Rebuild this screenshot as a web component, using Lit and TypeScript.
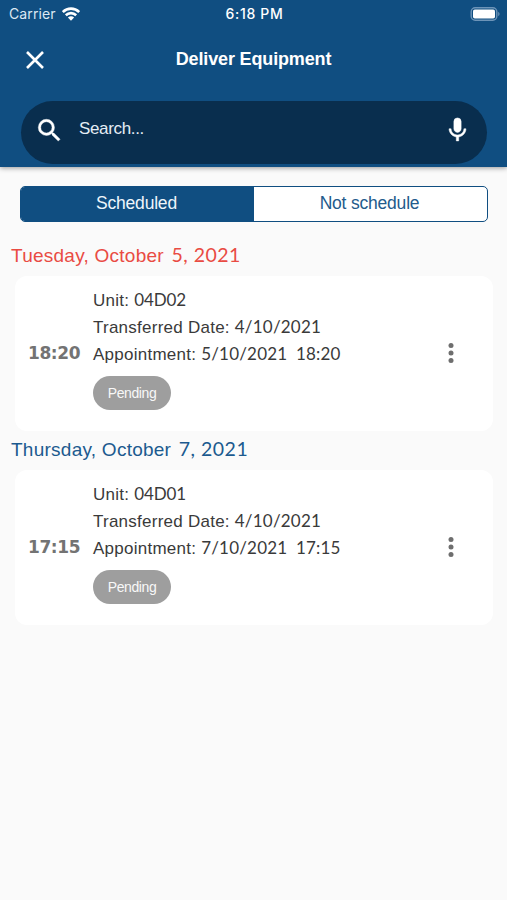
import { LitElement, html, css } from "lit";
import { customElement, property } from "lit/decorators.js";

interface Delivery {
  month: string;
  date: string;
  overdue: boolean;
  time: string;
  unit: string;
  transferred: string;
  appointment: string;
}

const deliveries: Delivery[] = [
  { month: "Tuesday, October", date: "5, 2021", overdue: true, time: "18:20", unit: "04D02", transferred: "4/10/2021", appointment: "5/10/2021 18:20" },
  { month: "Thursday, October", date: "7, 2021", overdue: false, time: "17:15", unit: "04D01", transferred: "4/10/2021", appointment: "7/10/2021 17:15" },
];

@customElement("status-bar")
export class StatusBar extends LitElement {
  static styles = css`
    :host { display: grid; grid-template-columns: 1fr auto 1fr; align-items: center; height: 27px; padding: 0 7px 0 9px; color: #fff; font: 14px/27px Inter, sans-serif; }
    .carrier { display: flex; align-items: center; gap: 6px; color: #dce8f3; letter-spacing: 0.1px; }
    .clock { font-weight: 500; font-size: 14px; letter-spacing: 0.7px; }
    .battery { justify-self: end; }
    svg { display: block; }
  `;
  render() {
    return html`
      <div class="carrier"><span>Carrier</span>
        <svg width="18" height="14" viewBox="0 0 18 14" fill="none" stroke="#fff" stroke-width="2.6">
          <path d="M.8 5C5.4.5 12.6.5 17.2 5"/><path d="M3.8 8.3c3-2.9 7.4-2.9 10.4 0"/>
          <path d="M9 13.7 5.9 10.5c1.7-1.6 4.5-1.6 6.2 0Z" fill="#fff" stroke="none"/>
        </svg>
      </div>
      <div class="clock">6:18 PM</div>
      <svg class="battery" width="30" height="14" viewBox="0 0 30 14">
        <rect x="1.2" y=".7" width="25.6" height="12.6" rx="4" fill="#104e81" stroke="#6d94b8" stroke-width="1.4"/>
        <rect x="3" y="2.5" width="22" height="9" rx="1.8" fill="#fff"/>
        <path d="M28.3 4.8c1.6.7 1.6 3.7 0 4.4Z" fill="#7c9fc0"/>
      </svg>`;
  }
}

@customElement("delivery-card")
export class DeliveryCard extends LitElement {
  @property({ attribute: false }) item!: Delivery;
  static styles = css`
    :host { display: flex; align-items: center; box-sizing: border-box; height: 155px; margin: 0 14px 0 15px; padding: 0 31px 2px 13px; border-radius: 12px; background: #fff; }
    .time { width: 65px; color: #737373; font: bold 17px/24px "DejaVu Sans", sans-serif; letter-spacing: -0.4px; }
    .info { flex: 1; padding-bottom: 8px; color: #3a3a3a; font-size: 17px; line-height: 27px; letter-spacing: 0.25px; }
    .row { height: 27px; }
    .value { font-family: Lato, sans-serif; line-height: 1; letter-spacing: -0.1px; }
    .date { letter-spacing: 0.2px; word-spacing: 4px; }
    .status { display: block; width: 78px; height: 34px; margin-top: 8px; border-radius: 17px; background: #9e9e9e; color: #f8f8f8; font-size: 14px; line-height: 34px; letter-spacing: -0.4px; text-align: center; }
    svg { display: block; }
  `;
  render() {
    const d = this.item;
    return html`
      <div class="time">${d.time}</div>
      <div class="info">
        <div class="row">Unit: <span class="value">${d.unit}</span></div>
        <div class="row">Transferred Date: <span class="value date">${d.transferred}</span></div>
        <div class="row">Appointment: <span class="value date">${d.appointment}</span></div>
        <span class="status">Pending</span>
      </div>
      <svg width="22" height="22" viewBox="0 0 22 22" fill="#6e6e6e">
        <circle cx="11" cy="3.6" r="2.5"/><circle cx="11" cy="11" r="2.5"/><circle cx="11" cy="18.4" r="2.5"/>
      </svg>`;
  }
}

@customElement("app-root")
export class AppRoot extends LitElement {
  static styles = css`
    :host { display: block; height: 900px; overflow: hidden; background: #fafafa; font-family: "Liberation Sans", Arial, sans-serif; }
    header { height: 167px; background: #104e81; box-shadow: 0 1px 5px rgba(0, 0, 0, 0.4); color: #fff; }
    .bar { display: grid; grid-template-columns: 70px 1fr 70px; align-items: center; height: 65px; }
    .close { margin-left: 26px; }
    h1 { margin: 0; padding-bottom: 2px; font-size: 18px; line-height: 24px; letter-spacing: -0.15px; text-align: center; }
    .search { display: flex; align-items: center; box-sizing: border-box; height: 63px; margin: 9px 20px 0 21px; padding: 0 18px 5px 16px; border-radius: 32px; background: #092e4e; }
    .query { flex: 1; margin-left: 17px; padding-bottom: 3px; color: #e4edf5; font-size: 17px; letter-spacing: -0.35px; }
    .tabs { display: grid; grid-template-columns: 1fr 1fr; box-sizing: border-box; height: 36px; margin: 19px 19px 0 20px; border: 1.5px solid #104e81; border-radius: 5px; overflow: hidden; background: #fff; color: #235b8c; font-size: 17.5px; line-height: 32px; letter-spacing: -0.2px; text-align: center; }
    .tabs > * { padding-right: 2px; }
    .active { background: #104e81; color: #edf5fb; }
    h2 { box-sizing: border-box; margin: 0; padding-left: 11px; height: 39px; color: #1c5a8f; font-size: 19px; font-weight: normal; line-height: 37px; letter-spacing: 0.25px; }
    .date { margin-left: 2px; font-family: Lato, sans-serif; font-size: 19.5px; line-height: 1; letter-spacing: 0.5px; }
    .days { padding-top: 15px; }
    .overdue { color: #e94b43; }
    svg { display: block; }
  `;
  render() {
    return html`
      <header>
        <status-bar></status-bar>
        <div class="bar">
          <svg class="close" width="18" height="18" viewBox="0 0 18 18" stroke="#fff" stroke-width="2.6"><path d="m1 1 16 16M17 1 1 17"/></svg>
          <h1>Deliver Equipment</h1>
        </div>
        <div class="search">
          <svg width="25" height="25" viewBox="2 2 20 20" fill="#fff" stroke="#fff" stroke-width=".3"><path d="M15.5 14h-.79l-.28-.27A6.47 6.47 0 0 0 16 9.5 6.5 6.5 0 1 0 9.5 16c1.61 0 3.09-.59 4.23-1.57l.27.28v.79l5 4.99L20.49 19l-4.99-5zm-6 0a4.5 4.5 0 1 1 0-9 4.5 4.5 0 0 1 0 9z"/></svg>
          <span class="query">Search...</span>
          <svg width="23" height="30" viewBox="2.5 0 19 24" fill="#fff" stroke="#fff" stroke-width=".4"><path d="M12 14c1.66 0 3-1.34 3-3V5a3 3 0 0 0-6 0v6c0 1.66 1.34 3 3 3z"/><path d="M17.3 11c0 3-2.54 5.1-5.3 5.1S6.7 14 6.7 11H5c0 3.41 2.72 6.23 6 6.72V21h2v-3.28c3.28-.48 6-3.3 6-6.72h-1.7z"/></svg>
        </div>
      </header>
      <div class="tabs"><div class="active">Scheduled</div><div>Not schedule</div></div>
      <div class="days">
        ${deliveries.map((d) => html`<section>
          <h2 class=${d.overdue ? "overdue" : ""}>${d.month} <span class="date">${d.date}</span></h2>
          <delivery-card .item=${d}></delivery-card>
        </section>`)}
      </div>`;
  }
}
